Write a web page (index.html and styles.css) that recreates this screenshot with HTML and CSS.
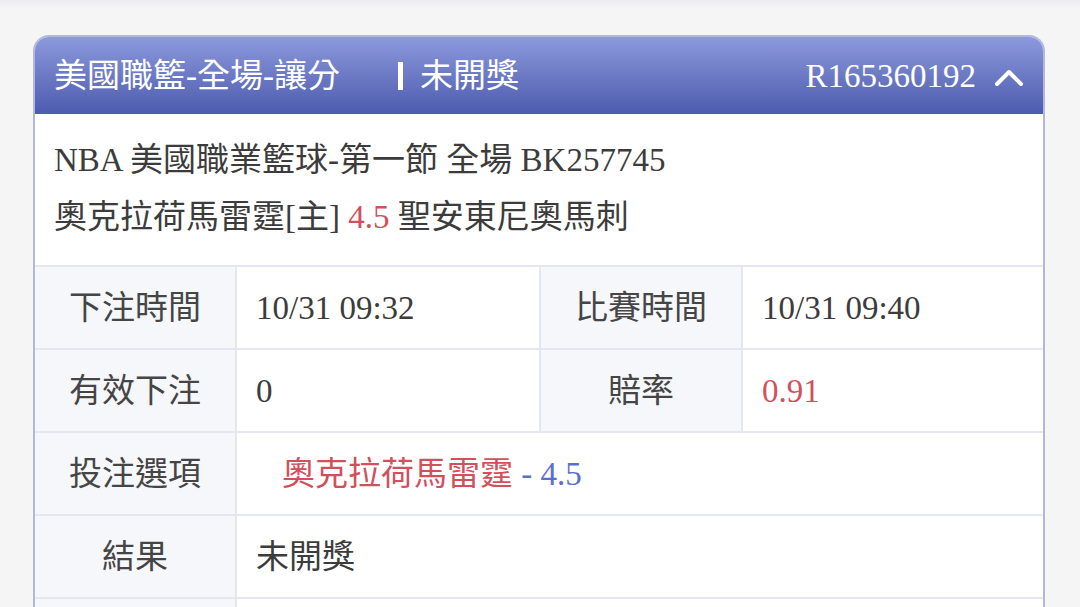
FILE: index.html
```html
<!DOCTYPE html>
<html lang="zh-Hant">
<head>
<meta charset="utf-8">
<title>注單</title>
<link rel="stylesheet" href="styles.css">
</head>
<body>
<div class="topbar"></div>
<main class="page">
  <section class="card">
    <header class="card-head">
      <div class="head-left">
        <span class="head-title">美國職籃-全場-讓分</span>
        <span class="head-sep"></span>
        <span class="head-status">未開獎</span>
      </div>
      <div class="head-right">
        <span class="head-id">R165360192</span>
        <svg class="caret" width="30" height="20" viewBox="0 0 30 20" aria-hidden="true">
          <path d="M3 17 L15 5 L27 17" fill="none" stroke="#ffffff" stroke-width="4" stroke-linecap="round" stroke-linejoin="round"/>
        </svg>
      </div>
    </header>
    <div class="info">
      <div class="info-line">NBA 美國職業籃球-第一節 全場 BK257745</div>
      <div class="info-line">奧克拉荷馬雷霆[主] <span class="red">4.5</span> 聖安東尼奧馬刺</div>
    </div>
    <div class="grid">
      <div class="cell label">下注時間</div>
      <div class="cell value">10/31 09:32</div>
      <div class="cell label">比賽時間</div>
      <div class="cell value">10/31 09:40</div>

      <div class="cell label">有效下注</div>
      <div class="cell value">0</div>
      <div class="cell label">賠率</div>
      <div class="cell value red">0.91</div>

      <div class="cell label">投注選項</div>
      <div class="cell value wide pick"><span class="red">奧克拉荷馬雷霆</span>&nbsp;<span class="blue">- 4.5</span></div>

      <div class="cell label">結果</div>
      <div class="cell value wide">未開獎</div>

      <div class="cell label"></div>
      <div class="cell value wide"></div>
    </div>
  </section>
</main>
</body>
</html>
```

FILE: styles.css
```css
* { box-sizing: border-box; }

html, body {
  margin: 0;
  padding: 0;
  background: #f5f5f6;
  height: 607px;
  overflow: hidden;
  font-family: "Liberation Serif", "Noto Sans CJK TC", serif;
  color: #3c3c3c;
}

.topbar {
  height: 8px;
  background: linear-gradient(#ececee, #f5f5f6);
}

.page {
  padding: 27px 35px 0 33px;
}

.card {
  border: 2px solid #b2b8dd;
  border-bottom: none;
  border-radius: 16px 16px 0 0;
  background: #ffffff;
  overflow: hidden;
}

.card-head {
  height: 77px;
  background: linear-gradient(#8c99dc, #4c5bae);
  display: flex;
  align-items: center;
  justify-content: space-between;
  padding: 0 19px 0 19px;
  color: #ffffff;
  font-size: 33px;
  line-height: 40px;
}

.head-left {
  display: flex;
  align-items: center;
}

.head-sep {
  width: 5px;
  height: 28px;
  background: #ffffff;
  margin: 0 17px 0 58px;
}

.head-right {
  display: flex;
  align-items: center;
  gap: 18px;
}

.head-id {
  font-family: "Liberation Serif", serif;
}

.caret {
  display: block;
  margin-top: 2px;
}

.info {
  padding: 18px 19px 19px 19px;
  font-size: 33px;
  line-height: 57px;
  color: #3c3c3c;
}

.info-line {
  white-space: nowrap;
}

.red { color: #d24f5c; }
.blue { color: #5a6ed0; }

.grid {
  display: grid;
  grid-template-columns: 200px 302px 200px 1fr;
  gap: 2px;
  background: #e4e6f1;
  border-top: 2px solid #e4e6f1;
}

.cell {
  height: 81px;
  display: flex;
  align-items: center;
  font-size: 33px;
  line-height: 40px;
  white-space: nowrap;
}

.label {
  background: #f6f7fb;
  justify-content: center;
  color: #454545;
}

.value {
  background: #ffffff;
  padding-left: 19px;
  color: #3c3c3c;
}

.value.red { color: #d24f5c; }

.wide {
  grid-column: span 3;
}

.pick {
  padding-left: 45px;
}
```
